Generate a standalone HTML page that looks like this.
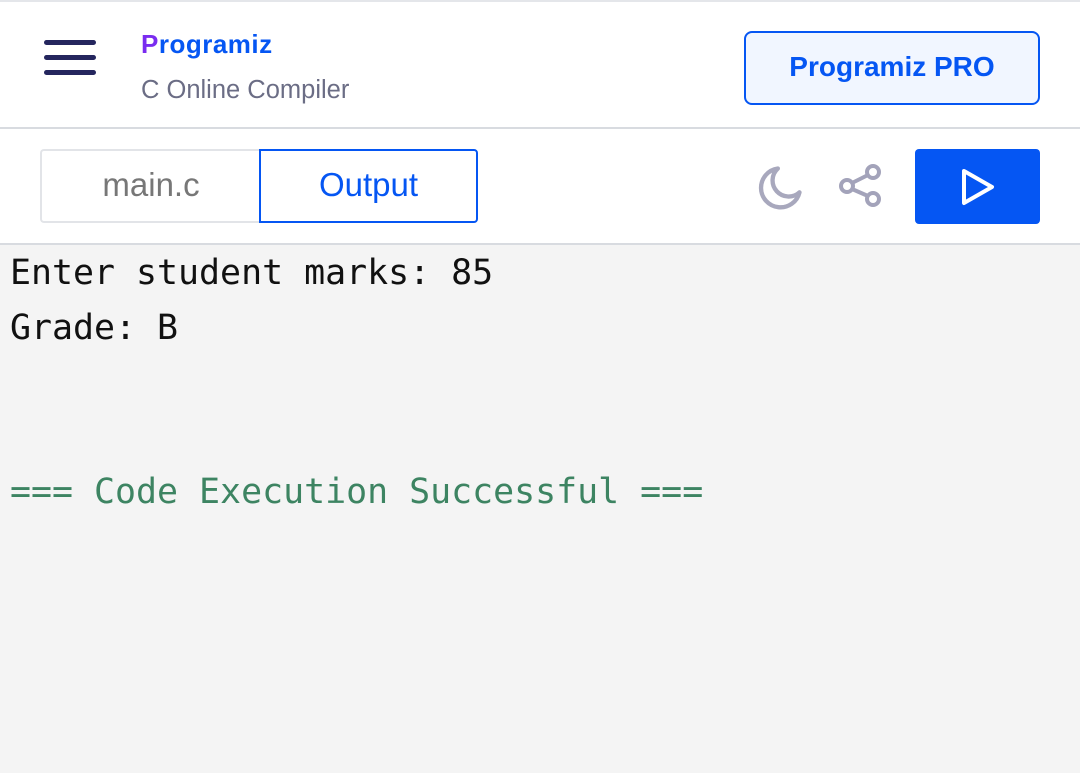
<!DOCTYPE html>
<html><head><style>
*{margin:0;padding:0;box-sizing:border-box}
body{width:1080px;height:773px;overflow:hidden;background:#f4f4f4;font-family:"Liberation Sans",sans-serif;position:relative}
.top{position:absolute;left:0;top:0;width:1080px;height:129px;background:#fff;border-top:2px solid #e4e6ea;border-bottom:2px solid #d8dbe0}
.bar{position:absolute;left:44px;width:52px;height:5px;border-radius:3px;background:#25265e}
.logo{position:absolute;left:141px;top:27px;font-size:26px;font-weight:bold;color:#0556f3;letter-spacing:0.5px}
.sub{position:absolute;left:141px;top:74px;font-size:25.5px;color:#6b6d85}
.pro{position:absolute;left:744px;top:29px;width:296px;height:74px;border:2px solid #0556f3;border-radius:8px;background:#f1f6ff;color:#0556f3;font-size:28px;font-weight:bold;text-align:center;line-height:68px}
.tb{position:absolute;left:0;top:129px;width:1080px;height:116px;background:#fff;border-bottom:2px solid #d8dbe0}
.tab{position:absolute;top:20px;height:74px;font-size:33px;text-align:center;line-height:68px}
.out{position:absolute;left:10px;font-family:"DejaVu Sans Mono","Liberation Mono",monospace;font-size:34.9px;color:#111;white-space:pre}
</style></head><body>
<div class="top">
<div class="bar" style="top:38px"></div><div class="bar" style="top:53px"></div><div class="bar" style="top:68px"></div>
<div class="logo"><span style="color:#7a2cf0">P</span>rogramiz</div>
<div class="sub">C Online Compiler</div>
<div class="pro">Programiz PRO</div>
</div>
<div class="tb">
<div class="tab" style="left:40px;width:220px;border:2px solid #e2e4e8;border-right:none;color:#777;border-radius:4px 0 0 4px">main.c</div>
<div class="tab" style="left:259px;width:219px;border:2px solid #0556f3;color:#0556f3;border-radius:0 4px 4px 0">Output</div>
<svg style="position:absolute;left:754px;top:33px" width="52" height="52" viewBox="0 0 48 48"><path d="M22 6A18 18 0 1 0 42 28A14 14 0 0 1 22 6Z" fill="none" stroke="#a8a8bd" stroke-width="4" stroke-linejoin="round"/></svg>
<svg style="position:absolute;left:836px;top:33px" width="50" height="50" viewBox="0 0 50 50"><g fill="none" stroke="#a3a3ba" stroke-width="4"><circle cx="37" cy="10" r="6"/><circle cx="11" cy="24" r="6"/><circle cx="37" cy="37" r="6"/><path d="M16 21L32 13M16 27L32 34"/></g></svg>
<div style="position:absolute;left:915px;top:20px;width:125px;height:75px;background:#0556f3;border-radius:4px"><svg style="position:absolute;left:45px;top:18px" width="36" height="40" viewBox="0 0 36 40"><path d="M4 4L32 20L4 36Z" fill="none" stroke="#fff" stroke-width="4" stroke-linejoin="round"/></svg></div>
</div>
<div class="out" style="top:253px">Enter student marks: 85</div>
<div class="out" style="top:308px">Grade: B</div>
<div class="out" style="top:472px;color:#3d8462">=== Code Execution Successful ===</div>
</body></html>
